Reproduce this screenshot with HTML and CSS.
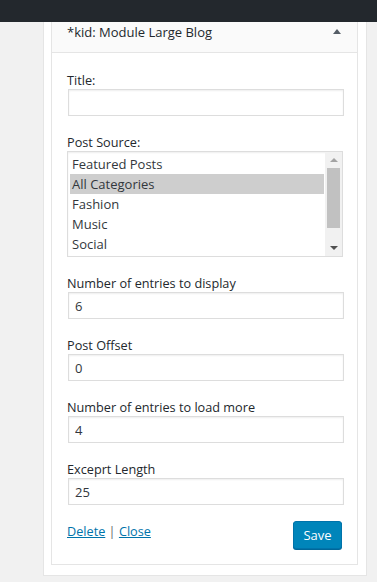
FILE: index.html
```html
<!DOCTYPE html>
<html lang="en">
<head>
  <meta charset="UTF-8" />
  <meta name="viewport" content="width=device-width, initial-scale=1.0" />
  <title>Widget</title>
  <link rel="stylesheet" href="styles.css">
</head>
<body>
  <div class="admin-bar"></div>

  <div class="sidebar">
    <div class="widget">
      <div class="widget-top">
        <h3>*kid: Module Large Blog</h3>
        <span class="toggle-arrow"></span>
      </div>

      <form class="widget-inside">
        <div class="field">
          <label>Title:</label>
          <input type="text" class="widefat" value="" />
        </div>

        <div class="field">
          <label>Post Source:</label>
          <div class="listbox">
            <ul class="options">
              <li>Featured Posts</li>
              <li class="selected">All Categories</li>
              <li>Fashion</li>
              <li>Music</li>
              <li>Social</li>
            </ul>
            <div class="scrollbar">
              <span class="arrow up"></span>
              <div class="track"><div class="thumb"></div></div>
              <span class="arrow down"></span>
            </div>
          </div>
        </div>

        <div class="field">
          <label>Number of entries to display</label>
          <input type="text" class="widefat" value="6" />
        </div>

        <div class="field">
          <label>Post Offset</label>
          <input type="text" class="widefat" value="0" />
        </div>

        <div class="field">
          <label>Number of entries to load more</label>
          <input type="text" class="widefat" value="4" />
        </div>

        <div class="field">
          <label>Exceprt Length</label>
          <input type="text" class="widefat" value="25" />
        </div>

        <div class="widget-control-actions">
          <div class="links">
            <a href="#">Delete</a> <span class="sep">|</span> <a href="#">Close</a>
          </div>
          <button type="button" class="button-primary">Save</button>
        </div>
      </form>
    </div>
  </div>
</body>
</html>
```

FILE: styles.css
```css
* {
  box-sizing: border-box;
}

body {
  margin: 0;
  background: #f1f1f1;
  color: #23282d;
  font-family: 'Open Sans', 'Noto Sans', sans-serif;
  font-size: 12.7px;
}

.admin-bar {
  height: 22px;
  background: #23282d;
}

.sidebar {
  margin-left: 43px;
  width: 324px;
  background: #fff;
  border: 1px solid #e5e5e5;
  border-top: none;
  padding: 0 8px 10px 7px;
}

.widget {
  border: 1px solid #e5e5e5;
  border-top: none;
  background: #fff;
}

.widget-top {
  height: 31px;
  background: #fafafa;
  border-bottom: 1px solid #e5e5e5;
  display: flex;
  align-items: center;
  justify-content: space-between;
  padding: 0 16px 10px 15px;
}

.widget-top h3 {
  margin: 0;
  font-size: 13px;
  font-weight: 400;
  line-height: 20px;
}

.toggle-arrow {
  width: 0;
  height: 0;
  border-left: 4px solid transparent;
  border-right: 4px solid transparent;
  border-bottom: 5px solid #555d66;
  margin-top: -1px;
}

.widget-inside {
  padding: 18px 15px 15px;
  display: flex;
  flex-direction: column;
  gap: 17px;
}

.field label {
  display: block;
  line-height: 18px;
  height: 18px;
}

.widefat {
  display: block;
  width: 276px;
  height: 27px;
  margin-left: 1px;
  border: 1px solid #ddd;
  box-shadow: inset 0 1px 2px rgba(0,0,0,0.07);
  padding: 0 6px;
  font-family: inherit;
  font-size: 13px;
  color: #32373c;
  outline: none;
}

/* fake multi select */
.listbox {
  display: flex;
  width: 276px;
  height: 106px;
  border: 1px solid #ddd;
  box-shadow: inset 0 1px 2px rgba(0,0,0,0.07);
  background: #fff;
}

.options {
  list-style: none;
  margin: 0;
  padding: 2px 1px 2px 2px;
  flex: 1;
}

.options li {
  height: 20px;
  line-height: 20px;
  padding-left: 2px;
  font-size: 13px;
  color: #32373c;
}

.options li.selected {
  background: #cecece;
}

.scrollbar {
  width: 17px;
  background: #f1f1f1;
  display: flex;
  flex-direction: column;
  align-items: center;
}

.scrollbar .arrow {
  width: 0;
  height: 0;
  border-left: 4px solid transparent;
  border-right: 4px solid transparent;
}

.scrollbar .arrow.up {
  border-bottom: 4px solid #a3a3a3;
  margin: 6px 0 6px;
}

.scrollbar .arrow.down {
  border-top: 4px solid #505050;
  margin: 7px 0 6px;
}

.scrollbar .track {
  flex: 1;
  width: 100%;
  padding: 0 2px;
}

.scrollbar .thumb {
  height: 60px;
  background: #c1c1c1;
}

.widget-control-actions {
  display: flex;
  justify-content: space-between;
  align-items: flex-start;
  margin-top: -3px;
}

.links {
  line-height: 18px;
  padding-top: 3px;
  color: #23282d;
}

.links a {
  color: #0073aa;
}

.links .sep {
  color: #666;
}

.button-primary {
  height: 28px;
  width: 49px;
  margin-top: 2px;
  padding: 0 0 1px;
  background: #0085ba;
  border: 1px solid #0073aa;
  border-radius: 3px;
  box-shadow: 0 1px 0 #006799;
  color: #fff;
  font-family: inherit;
  font-size: 13px;
  cursor: pointer;
}
```
